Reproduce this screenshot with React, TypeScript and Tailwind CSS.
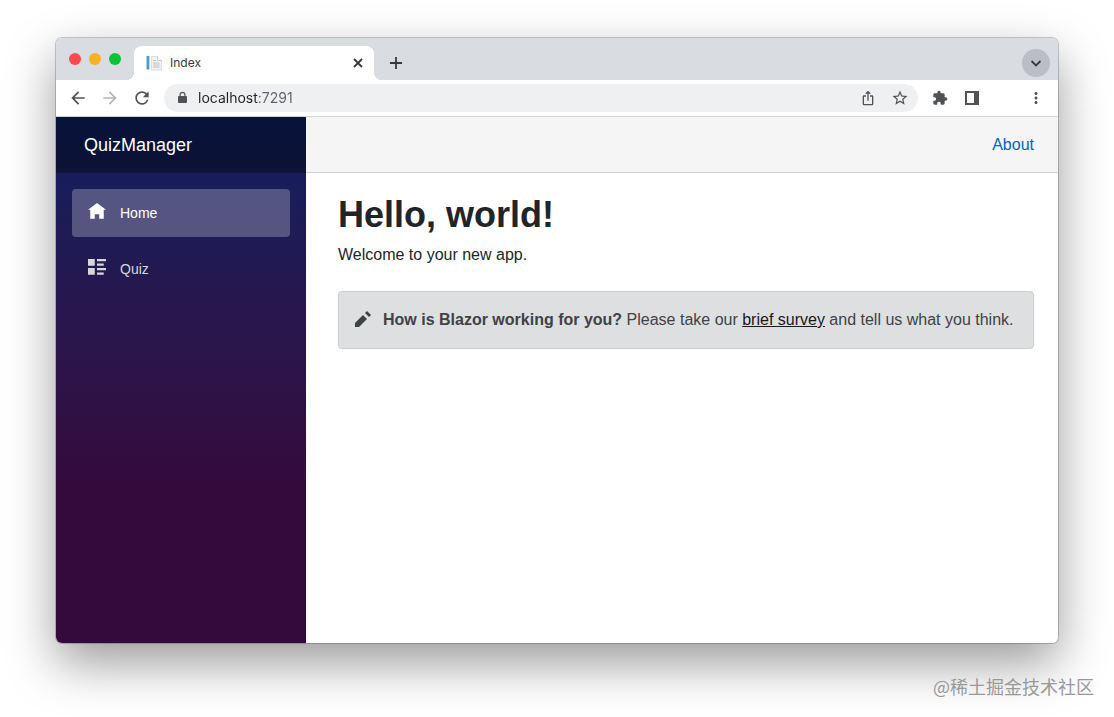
import { ReactNode, useState } from 'react'
import { MdArrowBack, MdArrowForward, MdExtension, MdIosShare, MdMoreVert, MdRefresh, MdStarOutline } from 'react-icons/md'

// Open Iconic glyphs, drawn on an 8x8 grid
const glyphs = {
  home: 'M4 0l-4 3h1v4h2v-2h2v2h2v-4.03l1 .03-4-3z',
  list: 'M0 0v3h3v-3h-3zm4 0v1h4v-1h-4zm0 2v1h3v-1h-3zm-4 2v3h3v-3h-3zm4 0v1h4v-1h-4zm0 2v1h3v-1h-3z',
  pencil: 'M6 0l-1 1 2 2 1-1-2-2zm-2 2l-4 4v2h2l4-4-2-2z',
}

function Glyph({ name, className }: { name: keyof typeof glyphs; className: string }) {
  return (
    <svg viewBox="0 0 8 8" className={className} fill="currentColor" aria-hidden="true">
      <path d={glyphs[name]} />
    </svg>
  )
}

// Line icons of the tab strip
function LineIcon({ d }: { d: string }) {
  return (
    <svg
      viewBox="0 0 14 14"
      className="h-3.5 w-3.5"
      fill="none"
      stroke="currentColor"
      strokeWidth="1.8"
      aria-hidden="true"
    >
      <path d={d} />
    </svg>
  )
}

function ToolButton({ label, children }: { label: string; children: ReactNode }) {
  return (
    <button type="button" aria-label={label} className="flex h-7 w-8 shrink-0 items-center justify-center">
      {children}
    </button>
  )
}

function Favicon() {
  return (
    <svg viewBox="0 0 16 16" className="h-4 w-4 shrink-0" aria-hidden="true">
      <rect x="0.5" y="1" width="2.5" height="13.5" fill="#4f9ccb" />
      <rect x="3" y="1" width="1" height="13.5" fill="#b9d9ea" />
      <path d="M5.5 1.5h6l4 4v9.5h-10z" fill="#f1f1f1" stroke="#d6d6d6" strokeWidth="0.8" />
      <path d="M11.5 1.5v4h4" fill="#fff" stroke="#c0c0c0" strokeWidth="0.8" />
      <path d="M7 5.5h3M7 8h6.5M7 10h6.5M7 12h6.5" stroke="#b8b8b8" strokeWidth="0.8" />
    </svg>
  )
}

function TabStrip() {
  return (
    <div className="flex h-[42px] items-end bg-[#d9dce1] text-[#36393d]">
      {/* Window controls */}
      <div className="flex gap-2 self-center px-[13px]">
        <button type="button" aria-label="Close window" className="h-3 w-3 rounded-full bg-[#fb4b4e]" />
        <button type="button" aria-label="Minimize window" className="h-3 w-3 rounded-full bg-[#fab122]" />
        <button type="button" aria-label="Zoom window" className="h-3 w-3 rounded-full bg-[#09c433]" />
      </div>

      {/* Active tab, with flared bottom corners */}
      <div className="relative flex h-[34px] w-60 items-center rounded-t-lg bg-white pr-2 pl-3 before:absolute before:bottom-0 before:-left-2 before:h-2 before:w-2 before:bg-[radial-gradient(circle_at_0_0,transparent_8px,white_8px)] after:absolute after:-right-2 after:bottom-0 after:h-2 after:w-2 after:bg-[radial-gradient(circle_at_100%_0,transparent_8px,white_8px)]">
        <Favicon />
        <span className="ml-2 flex-1 font-['Inter',sans-serif] text-xs">Index</span>
        <button type="button" aria-label="Close tab" className="flex h-4 w-4 items-center justify-center">
          <LineIcon d="M3 3l8 8M11 3l-8 8" />
        </button>
      </div>

      <button type="button" aria-label="New tab" className="ml-2 flex h-[34px] w-7 items-center justify-center">
        <LineIcon d="M7 1v12M1 7h12" />
      </button>

      <button
        type="button"
        aria-label="Search tabs"
        className="mr-2 mb-[3px] ml-auto flex h-7 w-7 items-center justify-center rounded-full bg-[#bbbec5]"
      >
        <LineIcon d="M2.500 5l4.500 4.500 4.500-4.500" />
      </button>
    </div>
  )
}

function Toolbar() {
  const [url, setUrl] = useState('localhost:7291')

  return (
    <div className="flex h-[37px] items-center border-b border-[#d4d5d7] bg-white px-1.5 text-[#505356]">
      <ToolButton label="Back">
        <MdArrowBack className="h-5 w-5" />
      </ToolButton>
      <ToolButton label="Forward">
        <MdArrowForward className="h-5 w-5 text-[#b4b6b8]" />
      </ToolButton>
      <ToolButton label="Reload">
        <MdRefresh className="h-5 w-5" />
      </ToolButton>

      {/* Address bar */}
      <div className="mx-1.5 flex h-7 min-w-0 flex-1 items-center rounded-full bg-[#eff0f2] pl-3">
        <svg viewBox="0 0 14 14" className="h-3.5 w-3.5 shrink-0" aria-hidden="true">
          <rect x="2" y="5" width="9" height="7" rx="1" fill="currentColor" />
          <path d="M4.1 5.5V3.7a2.4 2.4 0 0 1 4.8 0v1.8" fill="none" stroke="currentColor" strokeWidth="1.2" />
        </svg>
        {/* Host in dark text, port in grey */}
        <input
          type="text"
          aria-label="Address"
          value={url}
          onChange={(e) => setUrl(e.target.value)}
          className="ml-2 min-w-0 flex-1 bg-[linear-gradient(90deg,#202124_61px,#5f6368_61px)] bg-clip-text font-['Inter',sans-serif] text-sm text-transparent caret-black outline-none"
        />
        <ToolButton label="Share">
          <MdIosShare className="h-4 w-4" />
        </ToolButton>
        <ToolButton label="Bookmark">
          <MdStarOutline className="h-[18px] w-[18px]" />
        </ToolButton>
        <span className="w-0.5" />
      </div>

      <ToolButton label="Extensions">
        <MdExtension className="h-4 w-4" />
      </ToolButton>
      <ToolButton label="Side panel">
        <svg viewBox="0 0 14 14" className="h-3.5 w-3.5" fill="currentColor" aria-hidden="true">
          <path d="M0 0h14v14H0zM2 2v10h7V2z" fillRule="evenodd" />
        </svg>
      </ToolButton>
      <span className="w-8" />
      <ToolButton label="Menu">
        <MdMoreVert className="h-[18px] w-[18px]" />
      </ToolButton>
    </div>
  )
}

function Sidebar() {
  return (
    <aside className="w-[250px] shrink-0 bg-linear-to-b from-[#0c2060] to-[#340a3d] to-70%">
      <div className="flex h-14 items-center bg-black/40 pl-7">
        <a href="#" className="text-lg text-white">
          QuizManager
        </a>
      </div>
      <nav className="flex flex-col gap-2 p-4 text-sm">
        <a href="#home" className="flex h-12 items-center rounded bg-white/25 px-4 text-white">
          <Glyph name="home" className="mb-0.5 h-[18px] w-[18px]" />
          <span className="ml-3.5">Home</span>
        </a>
        <a href="#quiz" className="flex h-12 items-center rounded px-4 text-[#d7d7d7]">
          <Glyph name="list" className="mb-0.5 h-[18px] w-[18px]" />
          <span className="ml-3.5">Quiz</span>
        </a>
      </nav>
    </aside>
  )
}

function Page() {
  return (
    <div className="flex min-w-0 flex-1 flex-col bg-white">
      <div className="flex h-14 items-center justify-end border-b border-[#d3d3d3] bg-[#f5f5f5] px-6">
        <a href="#about" className="text-[#0366b8]">
          About
        </a>
      </div>
      <main className="pt-[18px] pr-6 pl-8 text-[#212529]">
        <h1 className="mb-1 text-4xl leading-[48px] font-bold">Hello, world!</h1>
        <p>Welcome to your new app.</p>
        <div className="mt-6 flex min-h-[58px] items-center rounded border border-[#caccce] bg-[#dddfe1] px-4 text-[#3f4246]">
          <Glyph name="pencil" className="mb-0.5 h-4 w-4 shrink-0" />
          <p className="ml-3">
            <strong>How is Blazor working for you?</strong> Please take our{' '}
            <a href="#survey" className="text-[#17191b] underline">
              brief survey
            </a>{' '}
            and tell us what you think.
          </p>
        </div>
      </main>
    </div>
  )
}

export default function App() {
  return (
    <div className="flex min-h-screen flex-col bg-white px-14 pt-[38px] font-['Liberation_Sans',Arial,sans-serif]">
      <div className="flex flex-1 flex-col overflow-hidden rounded-md shadow-[0_0_0_1px_rgba(0,0,0,0.2),0_20px_50px_rgba(0,0,0,0.4)]">
        <TabStrip />
        <Toolbar />
        <div className="flex flex-1">
          <Sidebar />
          <Page />
        </div>
      </div>
      <footer className="-mr-9 flex h-[74px] items-center justify-end pt-3">
        <span className="font-['Noto_Sans_CJK_SC',sans-serif] text-lg text-[#999999]">@稀土掘金技术社区</span>
      </footer>
    </div>
  )
}
